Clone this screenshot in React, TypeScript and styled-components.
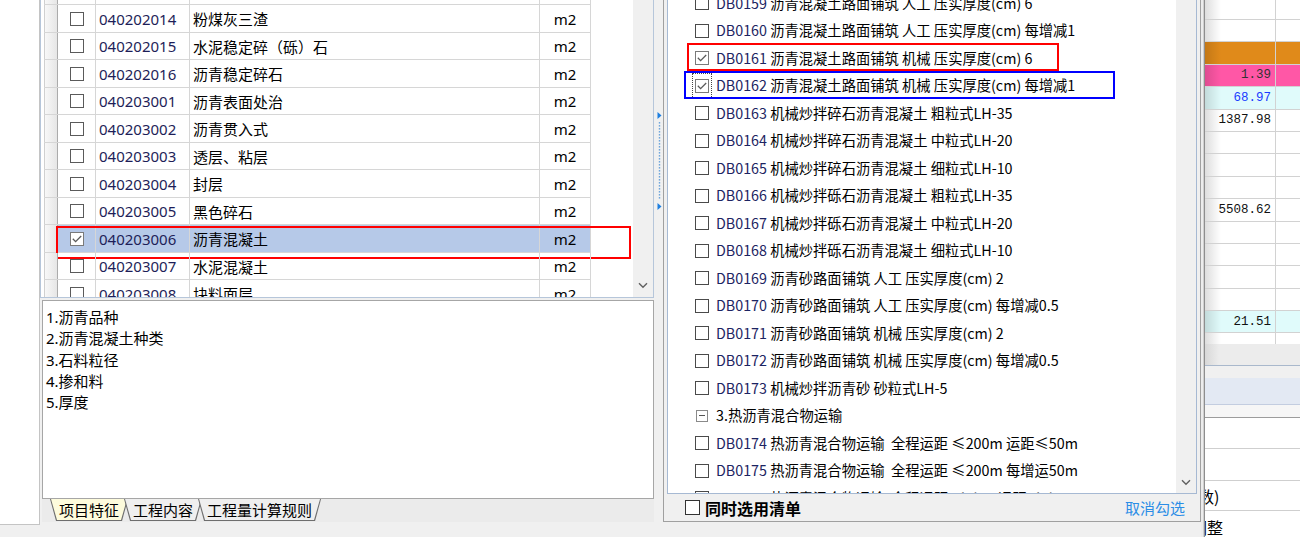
import React from "react";
import styled, { createGlobalStyle } from "styled-components";

const GlobalStyle = createGlobalStyle`
  html, body { margin: 0; padding: 0; background: #f0f0f0; }
  body { font-family: "Noto Sans", "Noto Sans CJK SC", sans-serif; }
  * { box-sizing: border-box; }
`;

const FONT = `"Noto Sans", "Noto Sans CJK SC", sans-serif`;
const CJK = `"Noto Sans CJK SC", sans-serif`;

const Page = styled.div`
  display: flex;
  width: 1300px;
  height: 537px;
  overflow: hidden;
  background: #f0f0f0;
  font-family: ${FONT};
  color: #000;
`;

const LeftStub = styled.div`
  flex: none;
  width: 40px;
  height: 525px;
  background: #fff;
  border-right: 1px solid #c4c4c4;
  border-bottom: 1px solid #c4c4c4;
`;

const LeftPane = styled.div`
  flex: none;
  width: 614px;
  display: flex;
  flex-direction: column;
`;

const ListBox = styled.div`
  height: 298px;
  display: flex;
  border-left: 1px solid #b6c6da;
  border-right: 1px solid #b6c6da;
  border-bottom: 1px solid #b6c6da;
  background: #fff;
`;

const GridArea = styled.div`
  flex: 1;
  overflow: hidden;
  padding-left: 3px;
`;

const GridInner = styled.div<{ $offset: number }>`
  margin-top: ${(p) => -p.$offset}px;
`;

const ScrollTrack = styled.div<{ $w: number; $pb: number }>`
  flex: none;
  width: ${(p) => p.$w}px;
  background: #f0f0f0;
  display: flex;
  flex-direction: column;
  justify-content: flex-end;
  align-items: center;
  padding-bottom: ${(p) => p.$pb}px;
`;

const LRow = styled.div`
  position: relative;
  display: grid;
  grid-template-columns: 14px 38px 94px 350px 51px;
  width: 547px;
  height: 27.5px;
  border-bottom: 1px solid #d6d6d6;
  font-size: 15px;
`;

const RowHead = styled.div`
  background: linear-gradient(to right, #f8f8f8, #e6e6e6);
  border-left: 1px solid #d0d0d0;
  border-right: 1px solid #ababab;
`;

const LCell = styled.div<{ $sel?: boolean; $align?: string; $color?: string }>`
  display: flex;
  align-items: center;
  justify-content: ${(p) => p.$align ?? "flex-start"};
  padding-left: ${(p) => (p.$align ? 0 : 3)}px;
  padding-top: 1px;
  border-right: 1px solid #d6d6d6;
  background: ${(p) => (p.$sel ? "#b6c9e8" : "transparent")};
  color: ${(p) => p.$color ?? "#000"};
  white-space: nowrap;
  overflow: hidden;
`;

const Mark = styled.div<{ $c: string; $l: number; $t: number; $w: number; $h: number }>`
  position: absolute;
  left: ${(p) => p.$l}px;
  top: ${(p) => p.$t}px;
  width: ${(p) => p.$w}px;
  height: ${(p) => p.$h}px;
  border: 2px solid ${(p) => p.$c};
  pointer-events: none;
`;

const BoxEl = styled.span<{ $size: number; $color: string }>`
  flex: none;
  display: inline-flex;
  align-items: center;
  justify-content: center;
  width: ${(p) => p.$size}px;
  height: ${(p) => p.$size}px;
  border: 1px solid ${(p) => p.$color};
  background: #fff;
`;

function Check({ checked, size = 14, color = "#4a4a4a" }: { checked?: boolean; size?: number; color?: string }) {
  return (
    <BoxEl $size={size} $color={checked ? "#7a7a7a" : color}>
      {checked && (
        <svg width="10" height="8" viewBox="0 0 10 8">
          <polyline points="0.8,3.8 3.6,6.6 9.2,1" fill="none" stroke="#5a5a5a" strokeWidth="1.3" />
        </svg>
      )}
    </BoxEl>
  );
}

const DescBox = styled.div`
  margin-top: 2px;
  margin-left: 2px;
  height: 199px;
  background: #fff;
  border: 1px solid #a6a6a6;
  padding: 6px 0 0 3px;
  font-size: 15px;
  line-height: 21.25px;
`;

const TabStrip = styled.div`
  height: 23px;
  margin-left: 2px;
  background: #ebebeb;
  display: flex;
  padding-left: 8px;
`;

const TabOuter = styled.div<{ $first?: boolean }>`
  height: 22px;
  margin-left: ${(p) => (p.$first ? 0 : -4)}px;
  background: #6e6e6e;
  clip-path: polygon(0 0, 100% 0, calc(100% - 6px) 100%, 6px 100%);
  display: flex;
`;

const TabFace = styled.div<{ $active?: boolean }>`
  margin: 0 1px 1px 1px;
  padding: 0 8px;
  flex: 1;
  display: flex;
  align-items: center;
  font-size: 15px;
  font-family: ${CJK};
  background: ${(p) => (p.$active ? "#fdfbdc" : "#efefef")};
  clip-path: polygon(0 0, 100% 0, calc(100% - 6px) 100%, 6px 100%);
`;

const Splitter = styled.div`
  flex: none;
  width: 9px;
  background: #f0f0f0;
  padding: 112px 0 0 3px;
`;

const RightPanel = styled.div`
  flex: none;
  width: 538px;
  height: 522px;
  border: 1px solid #a0a0a0;
  border-top: none;
  padding: 0 3px;
  display: flex;
  flex-direction: column;
`;

const RightList = styled.div`
  height: 494px;
  display: flex;
  background: #fff;
  border: 1px solid #a6b9d3;
  border-top: none;
`;

const RowsArea = styled.div`
  flex: 1;
  overflow: hidden;
`;

const RRow = styled.div`
  position: relative;
  height: 27.5px;
  display: flex;
  align-items: center;
  padding-left: 25px;
  padding-bottom: 2px;
  font-size: 14.3px;
  font-family: ${CJK};
  white-space: pre;
`;

const FocusWrap = styled.span<{ $focus?: boolean }>`
  flex: none;
  display: inline-flex;
  align-items: center;
  justify-content: center;
  width: 18px;
  height: 24px;
  margin-top: 2px;
  margin-right: 5px;
  outline: ${(p) => (p.$focus ? "1px dotted #444" : "none")};
  outline-offset: 0;
`;

const Code = styled.span`
  color: #1c2462;
`;

const GroupIcon = styled.span`
  width: 12px;
  height: 12px;
  border: 1px solid #8a8a8a;
  display: inline-flex;
  align-items: center;
  justify-content: center;
  &::after {
    content: "";
    width: 6px;
    height: 1px;
    background: #555;
  }
`;

const BottomBar = styled.div`
  height: 27px;
  display: flex;
  align-items: center;
  padding: 0 12px 0 18px;
`;

const BoldLabel = styled.span`
  margin-left: 5px;
  font-size: 16px;
  font-weight: 700;
  font-family: ${CJK};
`;

const LinkText = styled.span`
  margin-left: auto;
  font-size: 15px;
  color: #2b8de6;
  font-family: ${CJK};
`;

const Splitter2 = styled.div`
  flex: none;
  width: 3px;
  background: #ececec;
  border-right: 1px solid #cfcfcf;
`;

const FarRight = styled.div`
  flex: 1;
  display: flex;
  flex-direction: column;
  border-left: 1px solid #8e8e8e;
  background: #fff;
  overflow: hidden;
`;

const FarGrid = styled.div`
  height: 346px;
  overflow: hidden;
`;

const FRow = styled.div<{ $bg?: string }>`
  display: grid;
  grid-template-columns: 71px 1fr;
  height: 22.4px;
  border-bottom: 1px solid #d2d2d2;
  background: ${(p) => p.$bg ?? "#fff"};
`;

const FCell = styled.div<{ $color?: string; $first?: boolean }>`
  display: flex;
  align-items: center;
  justify-content: flex-end;
  padding-right: 4px;
  border-right: ${(p) => (p.$first ? "1px solid #d2d2d2" : "none")};
  background-image: ${(p) =>
    p.$first ? "linear-gradient(to right, rgba(0,0,0,0.13), rgba(0,0,0,0) 16px)" : "none"};
  font-family: "Liberation Mono", monospace;
  font-size: 12.5px;
  color: ${(p) => p.$color ?? "#111"};
`;

const Band = styled.div<{ $h: number; $bg: string; $line?: string; $pt?: number }>`
  flex: none;
  height: ${(p) => p.$h}px;
  padding-top: ${(p) => p.$pt ?? 0}px;
  background: ${(p) => p.$bg};
  border-bottom: ${(p) => (p.$line ? `1px solid ${p.$line}` : "none")};
  overflow: hidden;
  display: flex;
  align-items: center;
  white-space: nowrap;
  font-family: ${CJK};
  font-size: 16px;
`;

const ClipText = styled.span<{ $shift: number }>`
  margin-left: ${(p) => -p.$shift}px;
`;

function Chevron() {
  return (
    <svg width="10" height="7" viewBox="0 0 10 7">
      <polyline points="1,1.2 5,5.2 9,1.2" fill="none" stroke="#606060" strokeWidth="1.4" />
    </svg>
  );
}

const leftRows = [
  { code: "040202013", name: "山皮石" },
  { code: "040202014", name: "粉煤灰三渣" },
  { code: "040202015", name: "水泥稳定碎（砾）石" },
  { code: "040202016", name: "沥青稳定碎石" },
  { code: "040203001", name: "沥青表面处治" },
  { code: "040203002", name: "沥青贯入式" },
  { code: "040203003", name: "透层、粘层" },
  { code: "040203004", name: "封层" },
  { code: "040203005", name: "黑色碎石" },
  { code: "040203006", name: "沥青混凝土", sel: true },
  { code: "040203007", name: "水泥混凝土" },
  { code: "040203008", name: "块料面层" },
];

type RItem = { code?: string; text: string; checked?: boolean; group?: boolean; mark?: "red" | "blue" };

const rightRows: RItem[] = [
  { code: "DB0159", text: " 沥青混凝土路面铺筑 人工 压实厚度(cm) 6" },
  { code: "DB0160", text: " 沥青混凝土路面铺筑 人工 压实厚度(cm) 每增减1" },
  { code: "DB0161", text: " 沥青混凝土路面铺筑 机械 压实厚度(cm) 6", checked: true, mark: "red" },
  { code: "DB0162", text: " 沥青混凝土路面铺筑 机械 压实厚度(cm) 每增减1", checked: true, mark: "blue" },
  { code: "DB0163", text: " 机械炒拌碎石沥青混凝土 粗粒式LH-35" },
  { code: "DB0164", text: " 机械炒拌碎石沥青混凝土 中粒式LH-20" },
  { code: "DB0165", text: " 机械炒拌碎石沥青混凝土 细粒式LH-10" },
  { code: "DB0166", text: " 机械炒拌砾石沥青混凝土 粗粒式LH-35" },
  { code: "DB0167", text: " 机械炒拌砾石沥青混凝土 中粒式LH-20" },
  { code: "DB0168", text: " 机械炒拌砾石沥青混凝土 细粒式LH-10" },
  { code: "DB0169", text: " 沥青砂路面铺筑 人工 压实厚度(cm) 2" },
  { code: "DB0170", text: " 沥青砂路面铺筑 人工 压实厚度(cm) 每增减0.5" },
  { code: "DB0171", text: " 沥青砂路面铺筑 机械 压实厚度(cm) 2" },
  { code: "DB0172", text: " 沥青砂路面铺筑 机械 压实厚度(cm) 每增减0.5" },
  { code: "DB0173", text: " 机械炒拌沥青砂 砂粒式LH-5" },
  { group: true, text: "3.热沥青混合物运输" },
  { code: "DB0174", text: " 热沥青混合物运输  全程运距 ≤200m 运距≤50m" },
  { code: "DB0175", text: " 热沥青混合物运输  全程运距 ≤200m 每增运50m" },
  { code: "DB0176", text: " 热沥青混合物运输  全程运距 ≤1km 运距≤1km" },
];

const farRows: { bg?: string; v?: string; color?: string }[] = [
  {},
  {},
  { bg: "#e08a1a" },
  { bg: "#ff57a6", v: "1.39", color: "#333" },
  { bg: "#e0fbfb", v: "68.97", color: "#1a3cff" },
  { v: "1387.98" },
  {},
  {},
  {},
  { v: "5508.62" },
  {},
  {},
  {},
  {},
  { bg: "#e0fbfb", v: "21.51" },
  {},
];

const descItems = ["1.沥青品种", "2.沥青混凝土种类", "3.石料粒径", "4.掺和料", "5.厚度"];

export default function App() {
  return (
    <>
      <GlobalStyle />
      <Page>
        <LeftStub />
        <LeftPane>
          <ListBox>
            <GridArea>
              <GridInner $offset={22.5}>
                {leftRows.map((r) => (
                  <LRow key={r.code}>
                    <RowHead />
                    <LCell $sel={r.sel} $align="center">
                      <Check checked={r.sel} color="#5a5a5a" />
                    </LCell>
                    <LCell $sel={r.sel} $color="#1e1e58">{r.code}</LCell>
                    <LCell $sel={r.sel}>{r.name}</LCell>
                    <LCell $sel={r.sel} $align="center">m2</LCell>
                    {r.sel && <Mark $c="#ff0000" $l={12} $t={1} $w={575} $h={33} />}
                  </LRow>
                ))}
              </GridInner>
            </GridArea>
            <ScrollTrack $w={20} $pb={8}>
              <Chevron />
            </ScrollTrack>
          </ListBox>
          <DescBox>
            {descItems.map((d) => (
              <div key={d}>{d}</div>
            ))}
          </DescBox>
          <TabStrip>
            <TabOuter $first>
              <TabFace $active>项目特征</TabFace>
            </TabOuter>
            <TabOuter>
              <TabFace>工程内容</TabFace>
            </TabOuter>
            <TabOuter>
              <TabFace>工程量计算规则</TabFace>
            </TabOuter>
          </TabStrip>
        </LeftPane>

        <Splitter>
          <svg width="6" height="98" viewBox="0 0 6 98">
            <polygon points="0.5,0 4.5,3.5 0.5,7" fill="#1e7fe0" />
            {Array.from({ length: 26 }).map((_, i) => (
              <rect key={i} x="1.8" y={10 + i * 3} width="1.4" height="1.6" fill="#6fa6dc" />
            ))}
            <polygon points="0.5,91 4.5,94.5 0.5,98" fill="#1e7fe0" />
          </svg>
        </Splitter>

        <RightPanel>
          <RightList>
            <RowsArea>
              <GridInner $offset={10.75}>
                {rightRows.map((r, i) => (
                  <RRow key={i}>
                    <FocusWrap $focus={r.mark === "blue"}>
                      {r.group ? <GroupIcon /> : <Check checked={r.checked} />}
                    </FocusWrap>
                    {r.code && <Code>{r.code}</Code>}
                    <span>{r.text}</span>
                    {r.mark === "red" && <Mark $c="#ff0000" $l={19} $t={-1.25} $w={372} $h={28} />}
                    {r.mark === "blue" && <Mark $c="#0000ff" $l={16} $t={-0.75} $w={431} $h={28} />}
                  </RRow>
                ))}
              </GridInner>
            </RowsArea>
            <ScrollTrack $w={20} $pb={7}>
              <Chevron />
            </ScrollTrack>
          </RightList>
          <BottomBar>
            <Check size={15} color="#333" />
            <BoldLabel>同时选用清单</BoldLabel>
            <LinkText>取消勾选</LinkText>
          </BottomBar>
        </RightPanel>

        <Splitter2 />

        <FarRight>
          <FarGrid>
            <GridInner $offset={2.4}>
              {farRows.map((r, i) => (
                <FRow key={i} $bg={r.bg}>
                  <FCell $first $color={r.color}>{r.v}</FCell>
                  <FCell />
                </FRow>
              ))}
            </GridInner>
          </FarGrid>
          <Band $h={22} $bg="linear-gradient(to right, #d8d8d8, #ececec 14px)" $line="#a9b8cc" />
          <Band $h={12} $bg="#f0f0f0" />
          <Band $h={27} $bg="#e3e9f3" $line="#c3cde0" />
          <Band $h={13} $bg="#f6f6f6" $line="#9c9c9c" />
          <Band $h={31} $bg="#fff" $line="#cfcfcf" />
          <Band $h={32} $bg="#fff" $line="#cfcfcf" />
          <Band $h={30} $bg="#fff" $line="#cfcfcf">
            <ClipText $shift={7}>数)</ClipText>
          </Band>
          <Band $h={26} $bg="#fff" $pt={5}>
            <ClipText $shift={14}>调整</ClipText>
          </Band>
        </FarRight>
      </Page>
    </>
  );
}
